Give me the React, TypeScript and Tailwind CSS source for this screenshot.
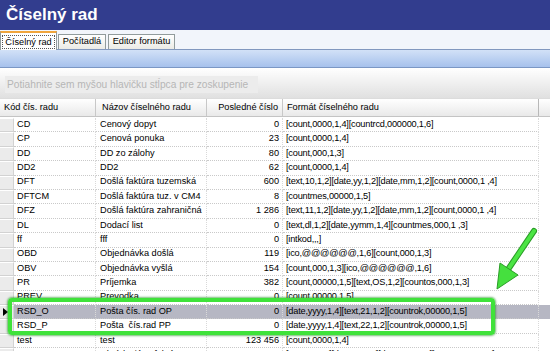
import React from "react"

type Row = { code: string; name: string; last: string; format: string }

const rows: Row[] = [
    { code: "CD", name: "Cenový dopyt", last: "0", format: "[count,0000,1,4][countrcd,000000,1,6]" },
    { code: "CP", name: "Cenová ponuka", last: "23", format: "[count,0000,1,4]" },
    { code: "DD", name: "DD zo zálohy", last: "80", format: "[count,000,1,3]" },
    { code: "DD2", name: "DD2", last: "62", format: "[count,0000,1,4]" },
    { code: "DFT", name: "Došlá faktúra tuzemská", last: "600", format: "[text,10,1,2][date,yy,1,2][date,mm,1,2][count,0000,1 ,4]" },
    { code: "DFTCM", name: "Došlá faktúra tuz. v CM4", last: "8", format: "[countmes,00000,1,5]" },
    { code: "DFZ", name: "Došlá faktúra zahraničná", last: "1 286", format: "[text,11,1,2][date,yy,1,2][date,mm,1,2][count,0000,1 ,4]" },
    { code: "DL", name: "Dodací list", last: "0", format: "[text,dl,1,2][date,yymm,1,4][countmes,000,1 ,3]" },
    { code: "ff", name: "fff", last: "0", format: "[intkod,,,]" },
    { code: "OBD", name: "Objednávka došlá", last: "119", format: "[ico,@@@@@@,1,6][count,000,1,3]" },
    { code: "OBV", name: "Objednávka vyšlá", last: "154", format: "[count,000,1,3][ico,@@@@@@,1,6]" },
    { code: "PR", name: "Príjemka", last: "382", format: "[count,00000,1,5][text,OS,1,2][countos,000,1,3]" },
    { code: "PREV", name: "Prevodka", last: "0", format: "[count,00000,1,5]" },
    { code: "RSD_O", name: "Pošta čís. rad OP", last: "0", format: "[date,yyyy,1,4][text,21,1,2][countrok,00000,1,5]" },
    { code: "RSD_P", name: "Pošta  čís.rad PP", last: "0", format: "[date,yyyy,1,4][text,22,1,2][countrok,00000,1,5]" },
    { code: "test", name: "test", last: "123 456", format: "[count,0000,1,4]" },
    { code: "UFT", name: "Uhrádzajúca faktúra tuz.", last: "224", format: "[text,20,1,2][date,yy,1,2][date,mm,1,2][count,0000,1,4]" },
]

const cell = "h-full flex items-center overflow-hidden whitespace-pre border-r border-[#d9d9d9] border-b border-dotted border-b-[#c9c9c9]"

export default function App() {
    return (
        <div className="relative w-[550px] h-[351px] overflow-hidden bg-white font-['Liberation_Sans',Arial,sans-serif] text-[9.2px] text-black">
            <div className="h-[30px] bg-[#323d8e] flex items-center pl-[6px] text-[17px] font-bold text-white">Číselný rad</div>

            {/* tabs */}
            <div className="h-[20px] bg-[#f2f5fb] border-b border-[#8298bf] flex items-end">
                <div className="w-[57px] h-[19px] -mb-px bg-white border border-b-0 border-[#919b9c] border-t-2 border-t-[#f0a53c] flex items-center justify-center">
                    <span className="px-[2px] leading-[12px] border border-dotted border-[#555]">Číselný rad</span>
                </div>
                <div className="ml-px w-[48px] h-[15px] bg-linear-to-b from-white to-[#ebebe6] border border-b-0 border-[#919b9c] flex items-center justify-center">Počítadlá</div>
                <div className="ml-[2px] w-[67px] h-[15px] bg-linear-to-b from-white to-[#ebebe6] border border-b-0 border-[#919b9c] flex items-center justify-center">Editor formátu</div>
            </div>

            <div className="h-[18px] bg-linear-to-b from-[#d2e1f7] to-[#a6c1ec] border-b border-[#7b97c4]" />

            {/* group panel */}
            <div className="h-[30px] bg-linear-to-b from-white to-[#e0e0e0] pl-[5px] pt-[8px]">
                <div className="w-[253px] h-[17px] bg-[#ececec] text-[10.2px] text-[#b6b6b6] flex items-center pl-[2px]">
                    Potiahnite sem myšou hlavičku stĺpca pre zoskupenie
                </div>
            </div>

            {/* header */}
            <div className="h-[19px] grid grid-cols-[96px_111px_76px_256px] bg-linear-to-b from-white to-[#e9e9e9] border-t border-[#dcdcdc] border-b border-b-[#c4c4c4]">
                <div className="flex items-center pl-[4px] border-r border-[#c8c8c8]">Kód čís. radu</div>
                <div className="flex items-center pl-[6px] border-r border-[#c8c8c8]">Názov číselného radu</div>
                <div className="flex items-center justify-end pr-[4px] border-r border-[#c8c8c8]">Posledné číslo</div>
                <div className="flex items-center pl-[4px] border-r border-[#b8b8b8]">Formát číselného radu</div>
            </div>

            {/* rows */}
            <div className="mt-px">
                {rows.map((r, i) => {
                    const sel = r.code === "RSD_O"
                    return (
                        <div key={i} className={`h-[14.4px] grid grid-cols-[14px_82px_111px_76px_256px] ${sel ? "bg-[#b6b7c3]" : ""}`}>
                            <div className="h-full flex items-center justify-center bg-[#ebebeb] border-r border-b border-[#d2d2d2] border-t border-t-white">
                                {sel && <span className="ml-[-2px] w-0 h-0 border-y-[4px] border-y-transparent border-l-[5px] border-l-black" />}
                            </div>
                            <div className={`${cell} pl-[3px]`}>{r.code}</div>
                            <div className={`${cell} pl-[4px]`}>{r.name}</div>
                            <div className={`${cell} justify-end pr-[3px]`}>{r.last}</div>
                            <div className={`${cell} pl-[3px] tracking-[-0.2px]`}>{r.format}</div>
                        </div>
                    )
                })}
            </div>

            {/* green highlight */}
            <div className="absolute left-[8px] top-[298px] w-[487px] h-[37px] rounded-[4px] border-[4px] border-[#3fe23a] shadow-[0_0_2px_1px_rgba(30,140,30,0.6)]" />
            <svg className="absolute left-0 top-0" width="550" height="351" viewBox="0 0 550 351">
                <line x1="534" y1="231" x2="509" y2="268" stroke="#2a9d26" strokeWidth="6" strokeLinecap="round" />
                <line x1="534" y1="231" x2="509" y2="268" stroke="#4be544" strokeWidth="4" strokeLinecap="round" />
                <polygon points="497,289 500,263 518,275" fill="#45e03e" stroke="#2a9d26" strokeWidth="1" strokeLinejoin="round" />
            </svg>
        </div>
    )
}
